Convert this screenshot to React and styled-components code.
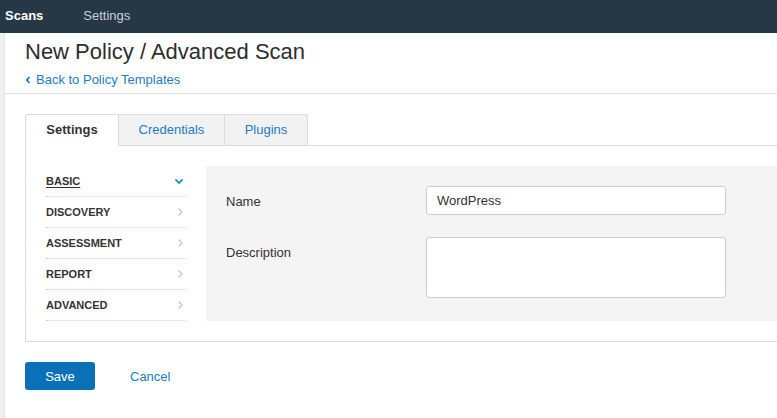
import React from "react";
import styled, { createGlobalStyle } from "styled-components";

const Global = createGlobalStyle`
  html, body { margin: 0; padding: 0; background: #fff; }
  body { font-family: "Liberation Sans", Arial, sans-serif; color: #333; overflow: hidden; }
  * { box-sizing: border-box; }
`;

const TopNav = styled.nav`
  height: 33px;
  background: #263746;
  display: flex;
  align-items: center;
  padding-left: 5px;
  gap: 40px;
`;

const NavItem = styled.a`
  font-size: 13px;
  font-weight: ${(p) => (p.$active ? 700 : 400)};
  color: ${(p) => (p.$active ? "#ffffff" : "#c9cfd5")};
  text-decoration: none;
  padding-bottom: 2px;
`;

const Shell = styled.div`
  display: flex;
  background: #f0f0f0;
  padding-left: 4px;
  min-height: 385px;
`;

const Main = styled.main`
  flex: 1;
  background: #fff;
  border-left: 1px solid #e2e2e2;
  overflow: hidden;
`;

const Header = styled.header`
  padding: 5px 0 5px 20px;
  border-bottom: 1px solid #dedede;
`;

const Title = styled.h1`
  margin: 0;
  font-size: 22px;
  font-weight: 400;
  line-height: 28px;
  color: #2d2d2d;
`;

const BackLink = styled.a`
  display: flex;
  align-items: center;
  gap: 5px;
  margin-top: 6px;
  font-size: 13px;
  line-height: 16px;
  color: #1b7dc2;
  text-decoration: none;
`;

const Body = styled.div`
  padding: 20px 0 0 20px;
`;

const Tabs = styled.div`
  display: flex;
  height: 32px;
`;

const Tab = styled.div`
  width: ${(p) => p.$w}px;
  display: flex;
  align-items: center;
  justify-content: center;
  padding-bottom: 2px;
  font-size: 13px;
  font-weight: ${(p) => (p.$active ? 700 : 400)};
  color: ${(p) => (p.$active ? "#333" : "#1b7dc2")};
  background: ${(p) => (p.$active ? "#fff" : "#f2f2f2")};
  border: 1px solid #dcdcdc;
  border-left: ${(p) => (p.$first ? "1px solid #dcdcdc" : "none")};
  border-bottom: ${(p) => (p.$active ? "1px solid #fff" : "1px solid #dcdcdc")};
  border-radius: ${(p) => (p.$first ? "3px 0 0 0" : p.$last ? "0 3px 0 0" : "0")};
  position: relative;
  z-index: 1;
`;

const Panel = styled.section`
  width: 800px;
  margin-top: -1px;
  border: 1px solid #dcdcdc;
  padding: 20px;
  display: flex;
  gap: 20px;
`;

const SideMenu = styled.ul`
  list-style: none;
  margin: 0;
  padding: 0;
  width: 140px;
  flex: none;
`;

const MenuItem = styled.li`
  height: 31px;
  display: flex;
  align-items: center;
  justify-content: space-between;
  border-bottom: 1px dotted #cfcfcf;
  font-size: 11px;
  font-weight: 700;
  color: #333;
  padding-right: 2px;
  span {
    text-decoration: ${(p) => (p.$active ? "underline" : "none")};
    text-underline-offset: 2px;
  }
`;

const Content = styled.div`
  flex: 1;
  background: #f4f4f4;
  padding: 20px 20px 22px 20px;
  display: flex;
  flex-direction: column;
  gap: 22px;
`;

const Row = styled.div`
  display: flex;
  align-items: flex-start;
`;

const Label = styled.label`
  width: 200px;
  padding-top: 2px;
  font-size: 13px;
  line-height: 27px;
  color: #333;
`;

const Input = styled.input`
  width: 300px;
  height: 29px;
  border: 1px solid #cccccc;
  border-radius: 3px;
  padding: 0 10px;
  font-family: "Liberation Sans", Arial, sans-serif;
  font-size: 13px;
  color: #333;
  background: #fff;
  outline: none;
`;

const TextArea = styled.textarea`
  display: block;
  width: 300px;
  height: 61px;
  border: 1px solid #cccccc;
  border-radius: 3px;
  background: #fff;
  resize: none;
  outline: none;
`;

const Actions = styled.div`
  display: flex;
  align-items: center;
  gap: 35px;
  margin-top: 20px;
`;

const SaveButton = styled.button`
  width: 70px;
  height: 28px;
  border: none;
  border-radius: 3px;
  background: #0a71b8;
  color: #fff;
  font-family: "Liberation Sans", Arial, sans-serif;
  font-size: 13px;
`;

const CancelLink = styled.a`
  font-size: 13px;
  color: #1b7dc2;
`;

const Chevron = ({ dir }) =>
  dir === "down" ? (
    <svg width="10" height="7" viewBox="0 0 10 7">
      <path d="M1.5 1.5 L5 5 L8.5 1.5" fill="none" stroke="#1a9bc4" strokeWidth="1.8" />
    </svg>
  ) : (
    <svg width="7" height="10" viewBox="0 0 7 10">
      <path d="M1.5 1.5 L5 5 L1.5 8.5" fill="none" stroke="#c8c8c8" strokeWidth="1.4" />
    </svg>
  );

const BackArrow = () => (
  <svg width="6" height="8" viewBox="0 0 6 8">
    <path d="M4.5 1 L1.8 4 L4.5 7" fill="none" stroke="#1b7dc2" strokeWidth="1.8" />
  </svg>
);

const menu = ["BASIC", "DISCOVERY", "ASSESSMENT", "REPORT", "ADVANCED"];

export default function App() {
  return (
    <>
      <Global />
      <TopNav>
        <NavItem $active>Scans</NavItem>
        <NavItem>Settings</NavItem>
      </TopNav>
      <Shell>
        <Main>
          <Header>
            <Title>New Policy / Advanced Scan</Title>
            <BackLink>
              <BackArrow />
              Back to Policy Templates
            </BackLink>
          </Header>
          <Body>
            <Tabs>
              <Tab $w={94} $active $first>Settings</Tab>
              <Tab $w={106}>Credentials</Tab>
              <Tab $w={83} $last>Plugins</Tab>
            </Tabs>
            <Panel>
              <SideMenu>
                {menu.map((m, i) => (
                  <MenuItem key={m} $active={i === 0}>
                    <span>{m}</span>
                    <Chevron dir={i === 0 ? "down" : "right"} />
                  </MenuItem>
                ))}
              </SideMenu>
              <Content>
                <Row>
                  <Label>Name</Label>
                  <Input defaultValue="WordPress" />
                </Row>
                <Row>
                  <Label>Description</Label>
                  <TextArea />
                </Row>
              </Content>
            </Panel>
            <Actions>
              <SaveButton>Save</SaveButton>
              <CancelLink>Cancel</CancelLink>
            </Actions>
          </Body>
        </Main>
      </Shell>
    </>
  );
}
